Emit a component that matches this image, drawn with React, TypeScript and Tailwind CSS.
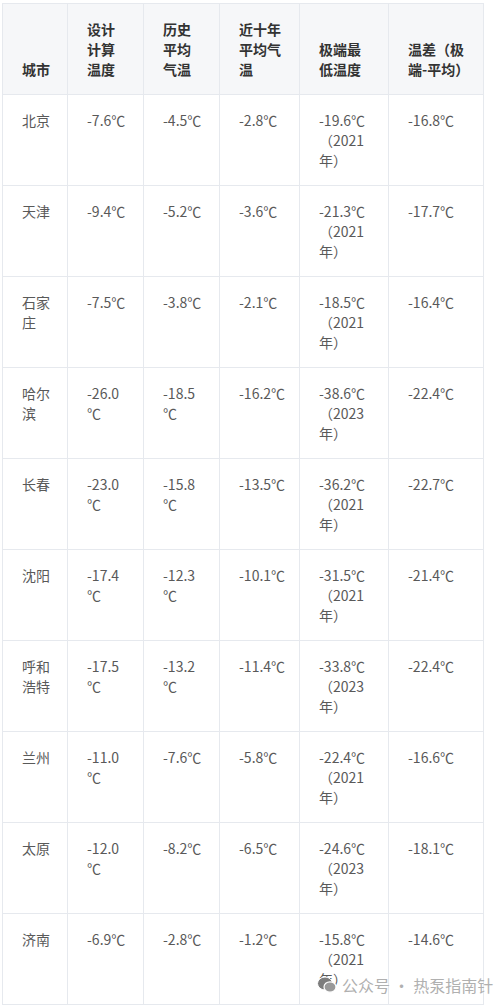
import React from 'react';

const font = { fontFamily: '"Noto Sans CJK SC", "Liberation Sans", sans-serif' };

type Row = { city: string; design: string; hist: string; recent: string; extreme: string; year: string; diff: string };

const rows: Row[] = [
  { city: '北京', design: '-7.6℃', hist: '-4.5℃', recent: '-2.8℃', extreme: '-19.6℃', year: '2021', diff: '-16.8℃' },
  { city: '天津', design: '-9.4℃', hist: '-5.2℃', recent: '-3.6℃', extreme: '-21.3℃', year: '2021', diff: '-17.7℃' },
  { city: '石家庄', design: '-7.5℃', hist: '-3.8℃', recent: '-2.1℃', extreme: '-18.5℃', year: '2021', diff: '-16.4℃' },
  { city: '哈尔滨', design: '-26.0℃', hist: '-18.5℃', recent: '-16.2℃', extreme: '-38.6℃', year: '2023', diff: '-22.4℃' },
  { city: '长春', design: '-23.0℃', hist: '-15.8℃', recent: '-13.5℃', extreme: '-36.2℃', year: '2021', diff: '-22.7℃' },
  { city: '沈阳', design: '-17.4℃', hist: '-12.3℃', recent: '-10.1℃', extreme: '-31.5℃', year: '2021', diff: '-21.4℃' },
  { city: '呼和浩特', design: '-17.5℃', hist: '-13.2℃', recent: '-11.4℃', extreme: '-33.8℃', year: '2023', diff: '-22.4℃' },
  { city: '兰州', design: '-11.0℃', hist: '-7.6℃', recent: '-5.8℃', extreme: '-22.4℃', year: '2021', diff: '-16.6℃' },
  { city: '太原', design: '-12.0℃', hist: '-8.2℃', recent: '-6.5℃', extreme: '-24.6℃', year: '2023', diff: '-18.1℃' },
  { city: '济南', design: '-6.9℃', hist: '-2.8℃', recent: '-1.2℃', extreme: '-15.8℃', year: '2021', diff: '-14.6℃' },
];

const WeChatIcon = () => (
  <svg width="20" height="18" viewBox="0 0 20 18">
    <ellipse cx="8" cy="7.5" rx="7.5" ry="6.5" fill="#7d7d7d" stroke="#fff" strokeWidth="1" />
    <ellipse cx="13" cy="11" rx="6" ry="5.2" fill="#999" stroke="#fff" strokeWidth="1.2" />
  </svg>
);

const App = () => {
  const th = 'border border-[#e6e9ee] align-bottom pt-[15px] pb-[15px] pl-[19px] text-left font-semibold text-[#333]';
  const td = 'border border-[#e6e9ee] align-top pt-[15px] pb-[15px] pl-[19px] text-left text-[#595959]';
  return (
    <div className="relative w-[495px] bg-white pt-[3px] pl-[2px]" style={font}>
      <table className="table-fixed border-collapse w-[481px] text-[14px] leading-[20px] break-words">
        <colgroup>
          <col className="w-[65px]" />
          <col className="w-[76px]" />
          <col className="w-[76px]" />
          <col className="w-[80px]" />
          <col className="w-[89px]" />
          <col className="w-[95px]" />
        </colgroup>
        <thead className="bg-[#f6f7f9]">
          <tr>
            <th className={`${th} pr-[14px]`}>城市</th>
            <th className={`${th} pr-[17px]`}>设计计算温度</th>
            <th className={`${th} pr-[17px]`}>历史平均气温</th>
            <th className={`${th} pr-[8px]`}>近十年平均气温</th>
            <th className={`${th} pr-[20px]`}>极端最低温度</th>
            <th className={`${th} pr-[14px]`}>温差（极端-平均）</th>
          </tr>
        </thead>
        <tbody>
          {rows.map((r) => (
            <tr key={r.city}>
              <td className={`${td} pr-[14px]`}>{r.city}</td>
              <td className={`${td} pr-[17px]`}>{r.design}</td>
              <td className={`${td} pr-[17px]`}>{r.hist}</td>
              <td className={`${td} pr-[8px]`}>{r.recent}</td>
              <td className={`${td} pr-[20px]`}>{r.extreme}（{r.year}年）</td>
              <td className={`${td} pr-[14px]`}>{r.diff}</td>
            </tr>
          ))}
        </tbody>
      </table>

      {/* 公众号水印 */}
      <div className="absolute left-[317px] top-[974px] flex items-center gap-[5px] text-[16px] leading-[22px] text-[#b0b0b0]">
        <WeChatIcon />
        <span>公众号 · 热泵指南针</span>
      </div>
    </div>
  );
};

export default App;
